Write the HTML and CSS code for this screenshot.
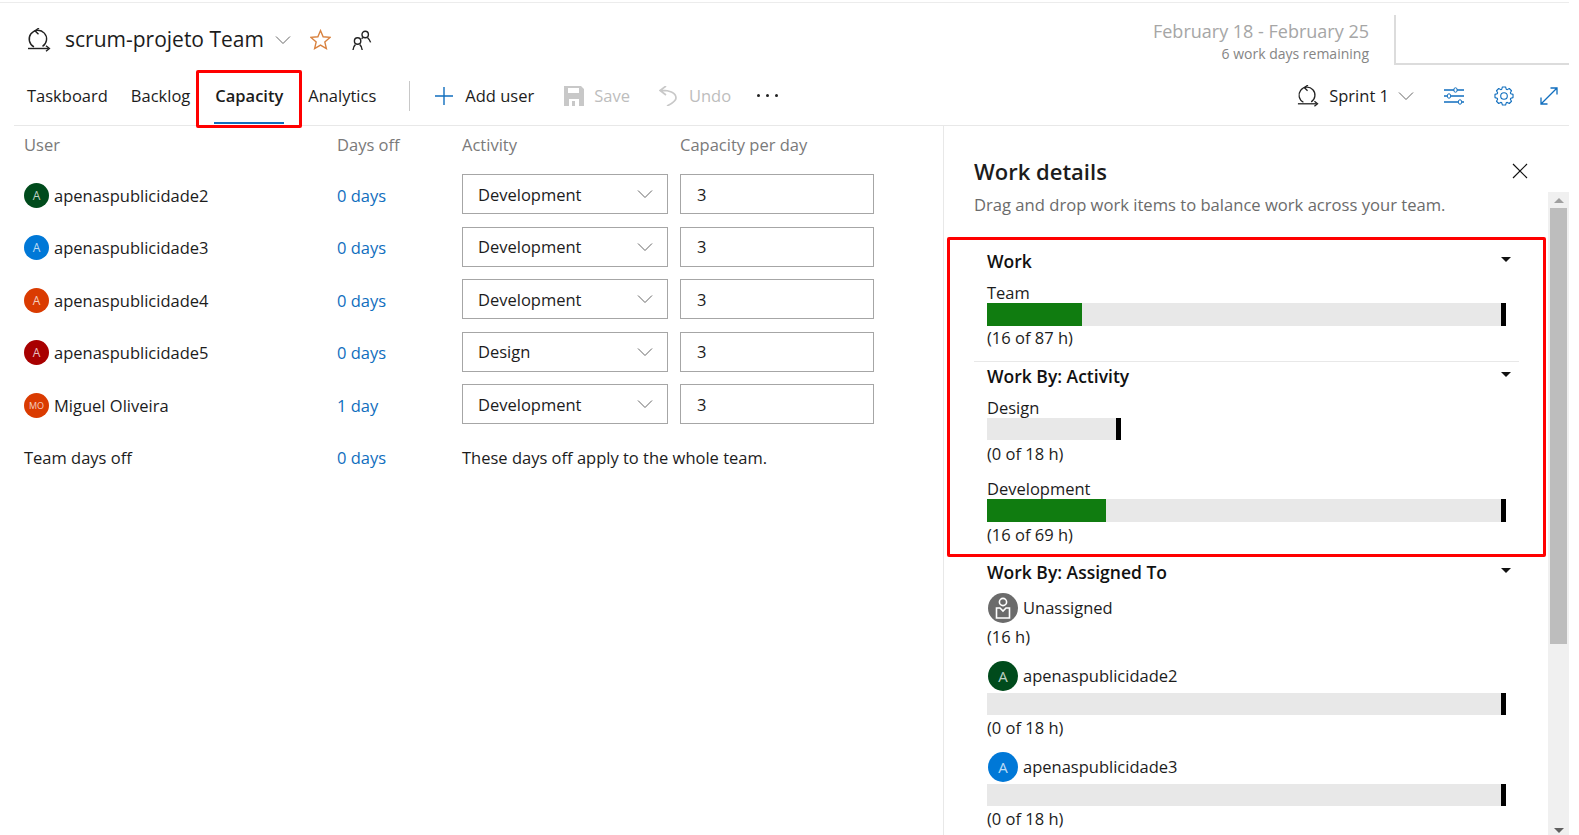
FILE: index.html
```html
<!DOCTYPE html>
<html lang="en">
<head>
    <meta charset="UTF-8">
    <title>scrum-projeto Team - Capacity</title>
    <link rel="stylesheet" href="styles.css">
</head>
<body>
    <svg class="defs" width="0" height="0">
        <symbol id="sprint" viewBox="0 0 24 24">
            <path d="M7 18.8 A8.7 8.7 0 1 1 15.5 18.4" fill="none" stroke="currentColor" stroke-width="1.4"/>
            <path d="M12 0 L8 2.8 L11.5 6.2" fill="none" stroke="currentColor" stroke-width="1.4"/>
            <path d="M1 20.5 H21.5" fill="none" stroke="currentColor" stroke-width="1.4"/>
            <path d="M19 17.8 L22.4 20.5 L19 23.2" fill="none" stroke="currentColor" stroke-width="1.4"/>
        </symbol>
        <symbol id="chevron" viewBox="0 0 16 10">
            <path d="M1 1.5 L8 8.5 L15 1.5" fill="none" stroke="currentColor" stroke-width="1"/>
        </symbol>
    </svg>

    <div class="page">
        <header class="top-bar">
            <div class="team-title">
                <svg class="icon-sprint"><use href="#sprint"/></svg>
                <h1>scrum-projeto Team</h1>
                <svg class="chevron title-chevron"><use href="#chevron"/></svg>
                <svg class="icon-star" viewBox="0 0 20 20"><polygon points="10,1.5 12.5,7.4 19,8 14.1,12.3 15.6,18.6 10,15.3 4.4,18.6 5.9,12.3 1,8 7.5,7.4" fill="none" stroke="#d9823f" stroke-width="1.3"/></svg>
                <svg class="icon-people" viewBox="0 0 20 20">
                    <circle cx="13.2" cy="4.5" r="3.2" fill="none" stroke="#222" stroke-width="1.4"/>
                    <circle cx="5.6" cy="11" r="3.2" fill="none" stroke="#222" stroke-width="1.4"/>
                    <path d="M1 20 C1.2 17.6 2.2 15.6 3.4 14.6 M10.2 20 C10 17.6 9 15.6 7.8 14.6" fill="none" stroke="#222" stroke-width="1.4"/>
                    <path d="M10.8 7.6 L9.6 8.8 M15.6 7.8 C17 9 18 10.4 18.6 12.4" fill="none" stroke="#222" stroke-width="1.4"/>
                </svg>
            </div>
            <div class="sprint-dates">
                <div class="date-range">February 18 - February 25</div>
                <div class="days-left">6 work days remaining</div>
            </div>
            <div class="burndown-box"></div>
        </header>

        <nav class="toolbar">
            <a class="tab">Taskboard</a>
            <a class="tab">Backlog</a>
            <a class="tab active">Capacity</a>
            <a class="tab">Analytics</a>
            <span class="divider"></span>
            <button class="tool add-user">
                <svg class="tool-icon plus" viewBox="0 0 18 18"><path d="M9 0 V18 M0 9 H18" fill="none" stroke="#106ebe" stroke-width="1.4"/></svg>
                Add user
            </button>
            <button class="tool off save">
                <svg class="tool-icon floppy" viewBox="0 0 20 20"><path d="M0 0 H17 L20 3 V20 H15 V13 H5 V20 H0 Z M4 2 V7 H15 V2 Z M8 15 H11 V20 H8 Z" fill="#c8c8c8" fill-rule="evenodd"/></svg>
                Save
            </button>
            <button class="tool off undo">
                <svg class="tool-icon undo-icon" viewBox="0 0 18 20"><path d="M7 0 L1 4.5 L7 9 M1 4.5 C10 4 17 6.5 17 12 C17 15 12 18 8 20" fill="none" stroke="#c8c8c8" stroke-width="1.7"/></svg>
                Undo
            </button>
            <span class="more"><i></i><i></i><i></i></span>

            <div class="toolbar-right">
                <svg class="icon-sprint small"><use href="#sprint"/></svg>
                <span class="sprint-name">Sprint 1</span>
                <svg class="chevron sprint-chevron"><use href="#chevron"/></svg>
                <svg class="blue-icon filter-icon" viewBox="0 0 20 18">
                    <path d="M0 3 H20 M0 9 H20 M0 15 H20" fill="none" stroke="#106ebe" stroke-width="1.3"/>
                    <rect x="10" y="0.8" width="3" height="4.4" rx="1.4" fill="#fff" stroke="#106ebe"/>
                    <rect x="3.5" y="6.8" width="3" height="4.4" rx="1.4" fill="#fff" stroke="#106ebe"/>
                    <rect x="14.5" y="12.8" width="3" height="4.4" rx="1.4" fill="#fff" stroke="#106ebe"/>
                </svg>
                <svg class="blue-icon gear-icon" viewBox="0 0 24 24">
                    <polygon points="19.42,9.59 21.85,10.26 21.85,13.74 19.42,14.41 18.95,15.54 20.19,17.74 17.74,20.19 15.54,18.95 14.41,19.42 13.74,21.85 10.26,21.85 9.59,19.42 8.46,18.95 6.26,20.19 3.81,17.74 5.05,15.54 4.58,14.41 2.15,13.74 2.15,10.26 4.58,9.59 5.05,8.46 3.81,6.26 6.26,3.81 8.46,5.05 9.59,4.58 10.26,2.15 13.74,2.15 14.41,4.58 15.54,5.05 17.74,3.81 20.19,6.26 18.95,8.46" fill="none" stroke="#106ebe" stroke-width="1.2" stroke-linejoin="round"/>
                    <circle cx="12" cy="12" r="3.6" fill="none" stroke="#106ebe" stroke-width="1.2"/>
                </svg>
                <svg class="blue-icon expand-icon" viewBox="0 0 18 18"><path d="M1 17 L17 1 M10.5 1 H17 V7.5 M1 10.5 V17 H7.5" fill="none" stroke="#106ebe" stroke-width="1.3"/></svg>
            </div>
        </nav>

        <main class="content">
            <section class="capacity-table">
                <div class="col-head">User</div>
                <div class="col-head">Days off</div>
                <div class="col-head">Activity</div>
                <div class="col-head">Capacity per day</div>

                <div class="user"><span class="avatar green">A</span>apenaspublicidade2</div>
                <a class="days">0 days</a>
                <div class="select">Development<svg class="chevron"><use href="#chevron"/></svg></div>
                <input class="hours" value="3">

                <div class="user"><span class="avatar blue">A</span>apenaspublicidade3</div>
                <a class="days">0 days</a>
                <div class="select">Development<svg class="chevron"><use href="#chevron"/></svg></div>
                <input class="hours" value="3">

                <div class="user"><span class="avatar orange">A</span>apenaspublicidade4</div>
                <a class="days">0 days</a>
                <div class="select">Development<svg class="chevron"><use href="#chevron"/></svg></div>
                <input class="hours" value="3">

                <div class="user"><span class="avatar red">A</span>apenaspublicidade5</div>
                <a class="days">0 days</a>
                <div class="select">Design<svg class="chevron"><use href="#chevron"/></svg></div>
                <input class="hours" value="3">

                <div class="user"><span class="avatar orange initials">MO</span>Miguel Oliveira</div>
                <a class="days">1 day</a>
                <div class="select">Development<svg class="chevron"><use href="#chevron"/></svg></div>
                <input class="hours" value="3">

                <div class="user">Team days off</div>
                <a class="days">0 days</a>
                <div class="team-note">These days off apply to the whole team.</div>
            </section>

            <aside class="details">
                <div class="details-head">
                    <h2>Work details</h2>
                    <svg class="close" viewBox="0 0 16 16"><path d="M1 1 L15 15 M15 1 L1 15" fill="none" stroke="#111" stroke-width="1.2"/></svg>
                </div>
                <div class="details-body">
                    <div class="details-scroll">
                        <p class="hint">Drag and drop work items to balance work across your team.</p>

                        <div class="group work">
                            <h3>Work<span class="caret"></span></h3>
                            <div class="bar-label team-label">Team</div>
                            <div class="bar full"><span class="fill" style="width: 18.4%"></span></div>
                            <div class="bar-text">(16 of 87 h)</div>
                        </div>

                        <div class="group by-activity">
                            <h3>Work By: Activity<span class="caret"></span></h3>
                            <div class="bar-label design-label">Design</div>
                            <div class="bar short"></div>
                            <div class="bar-text">(0 of 18 h)</div>
                            <div class="bar-label dev-label">Development</div>
                            <div class="bar full"><span class="fill" style="width: 23.2%"></span></div>
                            <div class="bar-text">(16 of 69 h)</div>
                        </div>

                        <div class="group by-person">
                            <h3>Work By: Assigned To<span class="caret"></span></h3>
                            <div class="person unassigned">
                                <svg class="avatar-big" viewBox="0 0 30 30">
                                    <circle cx="15" cy="15" r="15" fill="#6b6b6b"/>
                                    <circle cx="15" cy="9" r="3.6" fill="none" stroke="#fff" stroke-width="1.6"/>
                                    <path d="M8.5 15 H12 L15 18 L18 15 H21.5 V25 H8.5 Z" fill="none" stroke="#fff" stroke-width="1.6"/>
                                </svg>
                                Unassigned
                            </div>
                            <div class="bar-text no-bar">(16 h)</div>
                            <div class="person"><span class="avatar big green">A</span>apenaspublicidade2</div>
                            <div class="bar full"></div>
                            <div class="bar-text">(0 of 18 h)</div>
                            <div class="person"><span class="avatar big blue">A</span>apenaspublicidade3</div>
                            <div class="bar full"></div>
                            <div class="bar-text">(0 of 18 h)</div>
                        </div>
                    </div>
                    <div class="scrollbar">
                        <span class="arrow up"></span>
                        <span class="thumb"></span>
                        <span class="arrow down"></span>
                    </div>
                </div>
            </aside>
        </main>

        <!-- marcações vermelhas por cima da tela -->
        <div class="mark mark-tab"></div>
        <div class="mark mark-work"></div>
    </div>
</body>
</html>
```

FILE: styles.css
```css
* {
    box-sizing: border-box;
}

body {
    margin: 0;
    background-color: white;
    font-family: "Open Sans", "Noto Sans", sans-serif;
    font-size: 16.5px;
    color: #1c1c1c;
    overflow: hidden;
}

.defs {
    position: absolute;
}

.page {
    position: relative;
    width: 1569px;
    height: 835px;
    overflow: hidden;
}

.page::before {
    content: "";
    position: absolute;
    top: 2px;
    left: 0;
    width: 1579px;
    height: 1px;
    background-color: #ececec;
}

.top-bar {
    display: flex;
    height: 70px;
    padding-top: 15px;
}

.team-title {
    display: flex;
    align-items: center;
    height: 49px;
    padding-left: 27px;
}

.team-title h1 {
    margin: 0 0 0 14px;
    padding-bottom: 2px;
    font-size: 21px;
    font-weight: 400;
}

.icon-sprint {
    width: 24px;
    height: 24px;
    color: #222;
}

.icon-sprint.small {
    width: 22px;
    height: 22px;
}

.chevron {
    width: 16px;
    height: 10px;
    color: #666;
}

.title-chevron {
    margin-left: 11px;
}

.icon-star {
    width: 21px;
    height: 21px;
    margin-left: 19px;
}

.icon-people {
    width: 20px;
    height: 20px;
    margin-left: 21px;
}

.sprint-dates {
    margin-left: auto;
    text-align: right;
    padding-top: 1px;
}

.date-range {
    font-size: 18px;
    line-height: 30px;
    color: #a6a6a6;
}

.days-left {
    font-size: 14px;
    line-height: 15px;
    color: #858585;
}

.burndown-box {
    width: 175px;
    height: 50px;
    margin-left: 25px;
    border-left: 2px solid #dcdcdc;
    border-bottom: 2px solid #dcdcdc;
}

.toolbar {
    display: flex;
    align-items: center;
    height: 56px;
    margin-left: 14px;
    padding-left: 13px;
    padding-bottom: 4px;
    border-bottom: 1px solid #e8e8e8;
}

.tab {
    position: relative;
    margin-right: 25px;
    line-height: 52px;
    white-space: nowrap;
}

.tab:first-child {
    margin-right: 23px;
}

.tab.active {
    font-weight: 600;
}

.tab.active::after {
    content: "";
    position: absolute;
    left: -1px;
    right: -1px;
    bottom: -2px;
    height: 2px;
    background-color: #106ebe;
}

.divider {
    width: 1px;
    height: 30px;
    margin-left: 8px;
    background-color: #c8c8c8;
}

.tool {
    display: flex;
    align-items: center;
    gap: 12px;
    padding: 0;
    border: none;
    background: none;
    font: inherit;
    color: inherit;
}

.tool.off {
    color: #bdbdbd;
}

.add-user {
    margin-left: 25px;
}

.save {
    margin-left: 30px;
}

.undo {
    margin-left: 29px;
}

.tool-icon {
    flex: none;
}

.plus {
    width: 18px;
    height: 18px;
}

.floppy {
    width: 20px;
    height: 20px;
    margin-right: -2px;
}

.undo-icon {
    width: 18px;
    height: 20px;
}

.more {
    display: flex;
    gap: 6px;
    margin-left: 26px;
}

.more i {
    width: 3px;
    height: 3px;
    border-radius: 50%;
    background-color: #222;
}

.toolbar-right {
    display: flex;
    align-items: center;
    margin-left: auto;
    padding-right: 11px;
}

.sprint-name {
    margin-left: 10px;
}

.sprint-chevron {
    margin-left: 9px;
}

.blue-icon {
    flex: none;
}

.filter-icon {
    width: 20px;
    height: 18px;
    margin-left: 30px;
}

.gear-icon {
    width: 22px;
    height: 22px;
    margin-left: 29px;
}

.expand-icon {
    width: 18px;
    height: 18px;
    margin-left: 25px;
}

.content {
    display: flex;
    height: 709px;
}

.capacity-table {
    display: grid;
    grid-template-columns: 313px 125px 218px 194px;
    grid-template-rows: 42px repeat(6, 52.5px);
    align-items: center;
    width: 943px;
    padding-left: 24px;
    align-content: start;
}

.col-head {
    align-self: start;
    line-height: 38px;
    color: #7a7a7a;
}

.user {
    display: flex;
    align-items: center;
    gap: 5px;
}

.user,
.days,
.team-note {
    padding-top: 2px;
}

.avatar {
    display: flex;
    align-items: center;
    justify-content: center;
    flex: none;
    width: 25px;
    height: 25px;
    border-radius: 50%;
    font-size: 12px;
    color: rgba(255, 255, 255, 0.75);
}

.avatar.initials {
    font-size: 9px;
}

.avatar.big {
    width: 30px;
    height: 30px;
    font-size: 15px;
}

.green {
    background-color: #004b1c;
}

.blue {
    background-color: #0078d7;
}

.orange {
    background-color: #da3b01;
}

.red {
    background-color: #a80000;
}

.days {
    color: #106ebe;
}

.select {
    display: flex;
    align-items: center;
    justify-content: space-between;
    width: 206px;
    height: 40px;
    padding: 0 14px 0 15px;
    border: 1px solid #a6a6a6;
}

.hours {
    width: 194px;
    height: 40px;
    padding: 0 16px;
    border: 1px solid #a6a6a6;
    border-radius: 0;
    font: inherit;
    color: inherit;
    outline: none;
}

.team-note {
    grid-column: span 2;
}

.details {
    display: flex;
    flex-direction: column;
    width: 626px;
    border-left: 1px solid #e8e8e8;
}

.details-head {
    display: flex;
    align-items: center;
    justify-content: space-between;
    height: 66px;
    padding: 24px 41px 0 30px;
}

.details-head h2 {
    margin: 0;
    font-size: 22px;
    font-weight: 600;
}

.close {
    width: 16px;
    height: 16px;
}

.details-body {
    display: flex;
    flex: 1;
    min-height: 0;
}

.details-scroll {
    flex: 1;
    overflow: hidden;
    padding-left: 30px;
}

.hint {
    margin: 0;
    padding-top: 1px;
    line-height: 24px;
    color: #6b6b6b;
    font-size: 16.6px;
}

.group {
    width: 545px;
    padding-left: 13px;
}

.group h3 {
    display: flex;
    justify-content: space-between;
    margin: 0;
    padding-right: 8px;
    font-size: 17.5px;
    font-weight: 600;
    line-height: 24px;
    color: #111;
}

.caret {
    width: 0;
    height: 0;
    margin-top: 8px;
    border-left: 5px solid transparent;
    border-right: 5px solid transparent;
    border-top: 5px solid #111;
}

.work {
    padding-top: 32px;
    padding-bottom: 11px;
    border-bottom: 1px solid #e8e8e8;
    margin-bottom: 2px;
}

.work .bar-text {
    margin-top: 0;
}

.by-activity {
    height: 196px;
    padding-top: 0;
}

.by-activity .bar-text {
    margin-top: 2px;
}

.by-activity .bar-text:last-child {
    margin-top: 1px;
}

.by-person {
    padding-top: 0;
}

.bar-label {
    line-height: 20px;
}

.team-label {
    margin-top: 10px;
}

.design-label {
    margin-top: 10px;
}

.dev-label {
    margin-top: 13px;
}

.bar {
    position: relative;
    height: 22.5px;
    background-color: #e8e8e8;
}

.bar.full {
    width: 519px;
    border-right: 5px solid black;
}

.bar.short {
    width: 134px;
    border-right: 5px solid black;
}

.fill {
    display: block;
    height: 100%;
    background-color: #107c10;
}

.bar-text {
    margin-top: 1px;
    line-height: 24px;
}

.person {
    display: flex;
    align-items: center;
    gap: 5px;
    height: 30px;
    margin-left: 1px;
}

.avatar-big {
    width: 30px;
    height: 30px;
    flex: none;
}

.by-person .person {
    margin-top: 12px;
}

.by-person .unassigned {
    margin-top: 9px;
}

.by-person .bar {
    margin-top: 2px;
}

.by-person .bar-text {
    margin-top: 0.5px;
}

.by-person .bar-text.no-bar {
    margin-top: 2px;
}

.scrollbar {
    display: flex;
    flex-direction: column;
    align-items: center;
    width: 21px;
    margin-left: 0;
    background-color: #f0f0f0;
}

.thumb {
    width: 17px;
    height: 436px;
    margin-top: 5px;
    background-color: #bdbdbd;
}

.arrow {
    width: 0;
    height: 0;
    border-left: 5px solid transparent;
    border-right: 5px solid transparent;
}

.arrow.up {
    margin-top: 6px;
    border-bottom: 5px solid #a0a0a0;
}

.arrow.down {
    margin-top: auto;
    margin-bottom: 2px;
    border-top: 5px solid #606060;
}

.mark {
    position: absolute;
    border: 3px solid #f00;
    border-radius: 2px;
}

.mark-tab {
    left: 196px;
    top: 70px;
    width: 106px;
    height: 58px;
}

.mark-work {
    left: 947px;
    top: 237px;
    width: 599px;
    height: 320px;
}
```
